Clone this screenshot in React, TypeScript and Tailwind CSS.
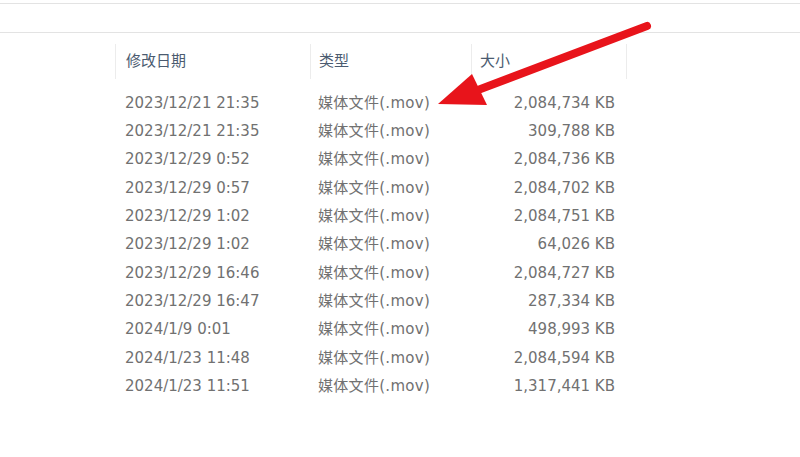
import React from 'react';

type Row = {
  date: string;
  type: string;
  size: string;
};

const rows: Row[] = [
  { date: '2023/12/21 21:35', type: '媒体文件(.mov)', size: '2,084,734 KB' },
  { date: '2023/12/21 21:35', type: '媒体文件(.mov)', size: '309,788 KB' },
  { date: '2023/12/29 0:52', type: '媒体文件(.mov)', size: '2,084,736 KB' },
  { date: '2023/12/29 0:57', type: '媒体文件(.mov)', size: '2,084,702 KB' },
  { date: '2023/12/29 1:02', type: '媒体文件(.mov)', size: '2,084,751 KB' },
  { date: '2023/12/29 1:02', type: '媒体文件(.mov)', size: '64,026 KB' },
  { date: '2023/12/29 16:46', type: '媒体文件(.mov)', size: '2,084,727 KB' },
  { date: '2023/12/29 16:47', type: '媒体文件(.mov)', size: '287,334 KB' },
  { date: '2024/1/9 0:01', type: '媒体文件(.mov)', size: '498,993 KB' },
  { date: '2024/1/23 11:48', type: '媒体文件(.mov)', size: '2,084,594 KB' },
  { date: '2024/1/23 11:51', type: '媒体文件(.mov)', size: '1,317,441 KB' },
];

const font = {
  fontFamily: '"DejaVu Sans", "Noto Sans CJK SC", sans-serif',
};

export default function App() {
  return (
    <div className="relative w-[800px] h-[457px] bg-white overflow-hidden" style={font}>
      <div className="h-[4px] border-b border-[#e3e3e3]" />
      <div className="h-[29px] border-b border-[#e3e3e3]" />

      <div className="pl-[115px] pt-[8px]">
        <div className="flex h-[38px] pt-[3px] text-[15px] text-[#4b5b70]">
          <div className="w-[195px] border-l border-[#ececec] pl-[10px] flex items-center">修改日期</div>
          <div className="w-[161px] border-l border-[#ececec] pl-[8px] flex items-center">类型</div>
          <div className="w-[156px] border-l border-r border-[#ececec] pl-[8px] flex items-center">大小</div>
        </div>

        <div className="pt-[10px] text-[15px] text-[#717171]">
          {rows.map((r, index) => (
            <div key={index} className="flex h-[28.3px] items-center">
              <div className="w-[195px] pl-[10px]">{r.date}</div>
              <div className="w-[161px] pl-[8px] tracking-[0.3px]">{r.type}</div>
              <div className="w-[156px] pr-[12px] text-right">{r.size}</div>
            </div>
          ))}
        </div>
      </div>

      <svg className="absolute left-0 top-0" width="800" height="457" viewBox="0 0 800 457">
        <line x1="647" y1="26" x2="470" y2="93" stroke="#e8141b" strokeWidth="8" strokeLinecap="round" />
        <polygon points="438,104 472,74 487,105" fill="#e8141b" />
      </svg>
    </div>
  );
}
